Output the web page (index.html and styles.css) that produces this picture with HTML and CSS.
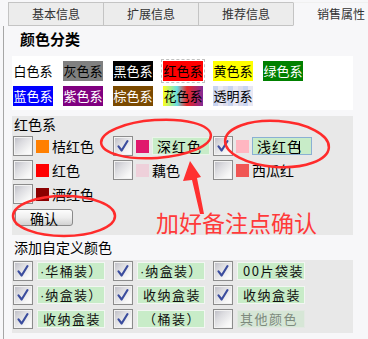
FILE: index.html
```html
<!DOCTYPE html>
<html lang="zh">
<head>
<meta charset="utf-8">
<link rel="stylesheet" href="styles.css">
</head>
<body>
<div class="tabs">
  <div class="tab">基本信息</div>
  <div class="tab">扩展信息</div>
  <div class="tab">推荐信息</div>
  <div class="tab active">销售属性</div>
</div>
<div class="panel">
  <div class="title">颜色分类</div>
  <div class="swatches">
    <div class="sw-row">
      <span class="sw c-white">白色系</span>
      <span class="sw c-gray">灰色系</span>
      <span class="sw c-black">黑色系</span>
      <span class="sw c-red selected">红色系</span>
      <span class="sw c-yellow">黄色系</span>
      <span class="sw c-green">绿色系</span>
    </div>
    <div class="sw-row">
      <span class="sw c-blue">蓝色系</span>
      <span class="sw c-purple">紫色系</span>
      <span class="sw c-brown">棕色系</span>
      <span class="sw c-multi">花色系</span>
      <span class="sw c-clear">透明系</span>
    </div>
  </div>

  <div class="group red-group">
    <div class="glabel">红色系</div>
    <div class="grid">
      <div class="item"><span class="cb"></span><span class="sq" style="background:#ff7f00"></span><span class="lbl">桔红色</span></div>
      <div class="item"><span class="cb"><svg viewBox="0 0 20 20"><path d="M5 10.5 L8.5 15 L15 4.5"/></svg></span><span class="sq" style="background:#e0186c"></span><span class="tag">深红色</span></div>
      <div class="item"><span class="cb"><svg viewBox="0 0 20 20"><path d="M5 10.5 L8.5 15 L15 4.5"/></svg></span><span class="sq" style="background:#ffb6c1"></span><span class="tag focus">浅红色<i class="caret"></i></span></div>
      <div class="item"><span class="cb"></span><span class="sq" style="background:#ff0000"></span><span class="lbl">红色</span></div>
      <div class="item"><span class="cb"></span><span class="sq" style="background:#eed0da"></span><span class="lbl">藕色</span></div>
      <div class="item"><span class="cb"></span><span class="sq" style="background:#f05654"></span><span class="lbl">西瓜红</span></div>
      <div class="item"><span class="cb"></span><span class="sq" style="background:#8b0000"></span><span class="lbl">酒红色</span></div>
    </div>
    <button class="btn">确认</button>
  </div>

  <div class="clabel">添加自定义颜色</div>
  <div class="group custom">
    <div class="grid">
      <div class="item"><span class="cb"><svg viewBox="0 0 20 20"><path d="M5 10.5 L8.5 15 L15 4.5"/></svg></span><span class="field scrolled"><span class="frag">·</span>华桶装）</span></div>
      <div class="item"><span class="cb"><svg viewBox="0 0 20 20"><path d="M5 10.5 L8.5 15 L15 4.5"/></svg></span><span class="field scrolled"><span class="frag">·</span>纳盒装）</span></div>
      <div class="item"><span class="cb"><svg viewBox="0 0 20 20"><path d="M5 10.5 L8.5 15 L15 4.5"/></svg></span><span class="field">00片袋装</span></div>
      <div class="item"><span class="cb"><svg viewBox="0 0 20 20"><path d="M5 10.5 L8.5 15 L15 4.5"/></svg></span><span class="field scrolled"><span class="frag">·</span>纳盒装）</span></div>
      <div class="item"><span class="cb"><svg viewBox="0 0 20 20"><path d="M5 10.5 L8.5 15 L15 4.5"/></svg></span><span class="field">收纳盒装</span></div>
      <div class="item"><span class="cb"><svg viewBox="0 0 20 20"><path d="M5 10.5 L8.5 15 L15 4.5"/></svg></span><span class="field">收纳盒装</span></div>
      <div class="item"><span class="cb"><svg viewBox="0 0 20 20"><path d="M5 10.5 L8.5 15 L15 4.5"/></svg></span><span class="field">收纳盒装</span></div>
      <div class="item"><span class="cb"><svg viewBox="0 0 20 20"><path d="M5 10.5 L8.5 15 L15 4.5"/></svg></span><span class="field">（桶装）</span></div>
      <div class="item"><span class="cb"></span><span class="field disabled">其他颜色</span></div>
    </div>
  </div>
</div>

<svg class="marks" viewBox="0 0 368 339" width="368" height="339">
  <ellipse cx="156" cy="139" rx="55" ry="19" transform="rotate(-4 156 139)"/>
  <ellipse cx="277" cy="144" rx="52" ry="23" transform="rotate(4 277 144)"/>
  <ellipse cx="64" cy="216" rx="51" ry="20"/>
  <polygon class="arrow" points="190,161 201,177 197,178 204,214 200,214 192,180 183,181"/>
</svg>
<div class="note">加好备注点确认</div>
</body>
</html>
```

FILE: styles.css
```css
* { box-sizing: border-box; }
html, body { margin: 0; padding: 0; }
body {
  width: 368px;
  height: 339px;
  overflow: hidden;
  position: relative;
  background: #f7f7f9;
  font-family: "Noto Sans CJK SC", "Noto Sans", sans-serif;
  color: #000;
}

.tabs {
  display: flex;
  margin-top: 2px;
  padding-left: 8px;
  height: 24px;
  overflow: hidden;
}
.tab {
  flex: 0 0 95px;
  height: 24px;
  border-top: 1px solid #c4c4c4;
  border-bottom: 1px solid #c4c4c4;
  border-left: 1px solid #c4c4c4;
  background: #ececec;
  font-size: 12px;
  line-height: 22px;
  text-align: center;
  color: #333;
}
.tab.active {
  flex: 0 0 75px;
  padding-right: 0;
  text-indent: 20px;
  background: #f7f7f9;
  border-bottom-color: transparent;
  border-top-color: #f0f0f0;
  white-space: nowrap;
  text-align: left;
  padding-left: 3px;
}

.panel {
  margin-left: 3px;
  border-left: 1px solid #a6a6a6;
  padding-left: 8px;
  height: 313px;
}

.title {
  height: 30px;
  line-height: 26px;
  padding-left: 8px;
  font-size: 15px;
  font-weight: bold;
}

.swatches {
  width: 341px;
  background: #fff;
  padding: 5px 0 4px 1px;
  display: flex;
  flex-direction: column;
  gap: 5px;
}
.sw-row { display: flex; gap: 10px; }
.sw {
  width: 40px;
  height: 20px;
  font-size: 13px;
  line-height: 20px;
  text-align: center;
  white-space: nowrap;
  overflow: hidden;
  color: #fff;
}
.c-white { background: #fff; color: #000; }
.c-gray { background: #808080; color: #000; }
.c-black { background: #000; }
.c-red { background: #ff0000; color: #000; }
.c-yellow { background: #ffff00; color: #000; }
.c-green { background: #008000; }
.c-blue { background: #0000ff; }
.c-purple { background: #800080; }
.c-brown { background: #7b4a00; }
.c-multi {
  color: #000;
  background:
    linear-gradient(90deg, rgba(255,255,0,0.9) 0%, rgba(0,200,210,0.6) 35%, rgba(230,0,0,0.85) 60%, rgba(120,20,140,0.9) 100%),
    #fff;
}
.c-clear {
  color: #000;
  background:
    repeating-linear-gradient(90deg, #c8d4f0 0 5px, #e8e8f4 5px 10px, #dcdcec 10px 15px);
}
.selected { outline: 1px dashed #c0c0c0; outline-offset: 1px; }

.group {
  width: 341px;
  background: #e8e8e8;
}
.red-group {
  margin-top: 6px;
  padding: 0 0 9px 1px;
}
.glabel {
  font-size: 14px;
  line-height: 16px;
  margin-bottom: 4px;
  padding-left: 1px;
}
.grid {
  display: grid;
  grid-template-columns: repeat(3, 100px);
  row-gap: 4px;
}
.item {
  display: flex;
  align-items: center;
  height: 20px;
}
.cb {
  flex: 0 0 20px;
  width: 20px;
  height: 20px;
  border: 1px solid #8c8c8c;
  box-shadow: inset 0 0 0 1px #f2f2f2;
  background: linear-gradient(135deg, #bcbcc4 0%, #dcdce0 35%, #f6f6f6 75%, #ffffff 100%);
  display: flex;
}
.cb svg { width: 18px; height: 18px; }
.cb path {
  fill: none;
  stroke: #3b4d9e;
  stroke-width: 2.4;
  stroke-linecap: round;
  stroke-linejoin: round;
}
.sq {
  flex: 0 0 13px;
  width: 13px;
  height: 13px;
  margin-left: 3px;
  margin-right: 3px;
}
.lbl {
  font-size: 14px;
  line-height: 20px;
  white-space: nowrap;
}
.tag {
  position: relative;
  width: 58px;
  height: 18px;
  padding-left: 4px;
  background: #c8ecc8;
  border: 1px solid #eaf4ea;
  font-size: 14px;
  line-height: 16px;
  letter-spacing: 1px;
  white-space: nowrap;
  overflow: hidden;
}
.tag.focus {
  width: 60px;
  border-color: #8ab0d4;
}
.caret {
  display: inline-block;
  width: 1px;
  height: 13px;
  background: #000;
  vertical-align: -2px;
  margin-left: -3px;
}

.btn {
  display: block;
  margin: 5px 0 0 2px;
  width: 58px;
  height: 17px;
  padding: 0;
  border: 1px solid #8a8a8a;
  border-radius: 3px;
  background: linear-gradient(180deg, #fdfdfd 0%, #eeeeee 50%, #d2d2d2 100%);
  font-family: inherit;
  font-size: 14px;
  line-height: 14px;
  color: #000;
}

.clabel {
  font-size: 14px;
  line-height: 25px;
  padding-left: 2px;
}
.custom {
  padding: 1px 0 4px 1px;
}
.field {
  margin-left: 4px;
  width: 68px;
  height: 18px;
  padding-left: 5px;
  background: #c8ecc8;
  border: 1px solid #f2f6f2;
  font-size: 13px;
  line-height: 16px;
  letter-spacing: 1.5px;
  white-space: nowrap;
  overflow: hidden;
  color: #111;
}
.field.scrolled { padding-left: 2px; letter-spacing: 1.3px; }
.frag {
  font-family: "Liberation Sans", sans-serif;
  letter-spacing: 0;
  margin-right: 1px;
}
.field.disabled {
  background: #d6e6d6;
  border-color: #e2e8e2;
  color: #7d8a7d;
  padding-left: 2px;
}

.marks {
  position: absolute;
  left: 0;
  top: 0;
  pointer-events: none;
}
.marks ellipse {
  fill: none;
  stroke: #ff2b2b;
  stroke-width: 2.5;
}
.marks .arrow { fill: #ff3030; }
.note {
  position: absolute;
  left: 156px;
  top: 207px;
  font-size: 23px;
  line-height: 30px;
  color: #ff3a3a;
  white-space: nowrap;
  pointer-events: none;
}
```
